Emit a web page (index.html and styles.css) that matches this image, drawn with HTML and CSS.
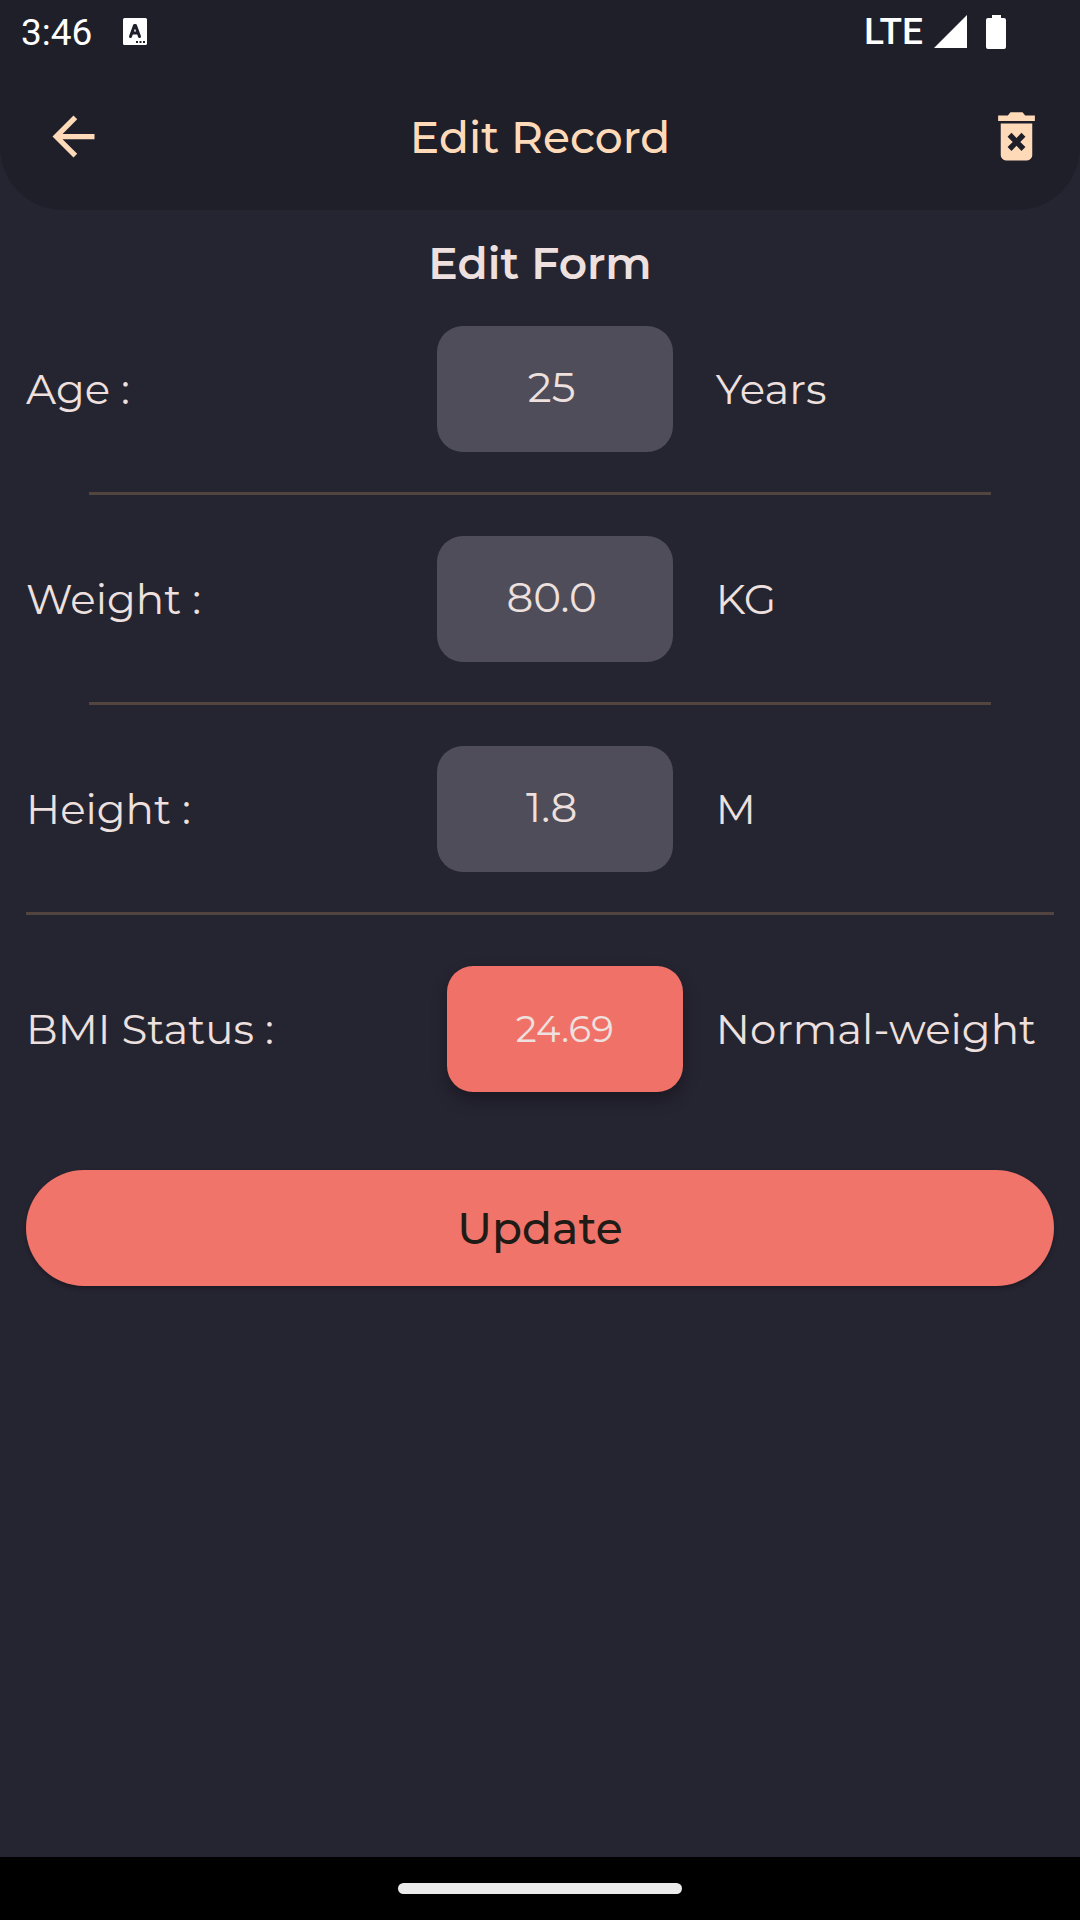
FILE: index.html
```html
<!DOCTYPE html>
<html lang="en">
<head>
<meta charset="utf-8">
<meta name="viewport" content="width=device-width, initial-scale=1">
<title>Edit Record</title>
<link rel="stylesheet" href="styles.css">
</head>
<body>
<header class="header">
  <div class="status">
    <span class="clock">3:46</span>
    <svg class="status-app" width="24" height="27" viewBox="0 0 24 27" aria-hidden="true">
      <path fill="#fff" fill-rule="evenodd" d="M1.500 0h21a1.500 1.500 0 0 1 1.500 1.500v24a1.500 1.500 0 0 1-1.500 1.500h-21A1.500 1.500 0 0 1 0 25.500v-24A1.500 1.500 0 0 1 1.500 0zM13 23v2h2v-2zM16.500 23v2h2v-2zM20 23v2h2v-2z"/>
      <path fill="none" stroke="#1f1f2a" stroke-width="3" stroke-linecap="round" stroke-linejoin="round" d="M7.500 18.500L11.500 7.500h1L16.500 18.500M9.500 15h5"/>
    </svg>
    <span class="network">LTE</span>
    <svg class="signal" width="33" height="33" viewBox="0 0 33 33" aria-hidden="true"><path fill="#fff" d="M33 0v33H0z"/></svg>
    <svg class="battery" width="20" height="34" viewBox="0 0 20 34" aria-hidden="true"><path fill="#fff" d="M6 0h9v3h3a2 2 0 0 1 2 2v27a2 2 0 0 1-2 2H2a2 2 0 0 1-2-2V5a2 2 0 0 1 2-2h4z"/></svg>
  </div>
  <div class="toolbar">
    <button class="icon-button" type="button" aria-label="Back">
      <svg viewBox="0 0 24 24" aria-hidden="true"><path fill="currentColor" d="M20 11H7.830l5.590-5.590L12 4l-8 8 8 8 1.410-1.410L7.830 13H20z"/></svg>
    </button>
    <h1 class="title">Edit Record</h1>
    <button class="icon-button icon-button-end" type="button" aria-label="Delete record">
      <svg viewBox="0 0 24 24" aria-hidden="true"><path fill="currentColor" fill-rule="evenodd" d="M5 4h3.700l1-1.200h4.600l1 1.200H19v2.100H5zM6 7h12V19.100a2 2 0 0 1-2 2H8a2 2 0 0 1-2-2zM10.100 10.600L8.600 12.100l1.950 1.950L8.600 16l1.500 1.500L12 15.550l1.900 1.950 1.500-1.500-1.950-1.950 1.950-1.950-1.500-1.500L12 12.550z"/></svg>
    </button>
  </div>
</header>

<main class="content">
  <h2 class="form-title">Edit Form</h2>
  <form class="form">
    <div class="row">
      <label for="age">Age :</label>
      <input class="field" id="age" type="text" inputmode="numeric" value="25">
      <span class="unit">Years</span>
    </div>
    <hr class="divider">
    <div class="row">
      <label for="weight">Weight :</label>
      <input class="field" id="weight" type="text" inputmode="decimal" value="80.0">
      <span class="unit">KG</span>
    </div>
    <hr class="divider">
    <div class="row">
      <label for="height">Height :</label>
      <input class="field" id="height" type="text" inputmode="decimal" value="1.8">
      <span class="unit">M</span>
    </div>
    <hr class="divider divider-full">
    <div class="row row-result">
      <label for="bmi">BMI Status :</label>
      <output class="result" id="bmi" for="weight height">24.69</output>
      <span class="unit">Normal-weight</span>
    </div>
    <button class="submit" type="button">Update</button>
  </form>
</main>

<footer class="system-nav"><span class="handle"></span></footer>
</body>
</html>
```
FILE: styles.css
```css
* {
  box-sizing: border-box;
}

body {
  margin: 0;
  min-height: 100vh;
  display: flex;
  flex-direction: column;
  background: #252431;
  color: #ede0de;
  font-family: Montserrat, Inter, sans-serif;
  font-size: 42px;
  line-height: 58px;
}

.header {
  background: #1f1f2a;
  border-radius: 0 0 63px 63px;
  color: #ffdab9;
}

.status {
  display: flex;
  align-items: center;
  height: 63px;
  padding: 0 74px 0 21px;
  color: #fff;
  font-family: Roboto, sans-serif;
  font-size: 37px;
}

.clock {
  padding-top: 2px;
}

.status-app {
  margin-left: 31px;
}

.network {
  margin-left: auto;
  font-weight: 500;
}

.signal {
  margin-left: 11px;
}

.battery {
  margin-left: 19px;
}

.toolbar {
  display: grid;
  grid-template-columns: 1fr auto 1fr;
  align-items: center;
  height: 147px;
  padding: 0 32px;
}

.icon-button {
  width: 63px;
  height: 63px;
  margin-left: 10px;
  padding: 0;
  border: 0;
  background: none;
  color: inherit;
}

.icon-button-end {
  justify-self: end;
  margin-left: 0;
}

.icon-button svg {
  display: block;
  width: 100%;
  height: 100%;
}

.title {
  margin: 0;
  font-size: 44px;
  font-weight: 500;
}

.content {
  flex: 1;
  padding: 24px 26px;
}

.form-title {
  margin: 0 0 34px;
  font-size: 44px;
  font-weight: 600;
  text-align: center;
}

.row {
  display: grid;
  grid-template-columns: 14fr 236px 13fr;
  align-items: center;
}

.row-result {
  grid-template-columns: 17fr 236px 15fr;
}

.field,
.result {
  width: 100%;
  height: 126px;
  border: 0;
  border-radius: 26px;
  color: inherit;
  font-family: inherit;
  text-align: center;
}

.field {
  padding: 0 6px 4px 0;
  background: #4e4d59;
  font-size: 42px;
}

.result {
  display: block;
  background: #f07167;
  box-shadow: 0 8px 16px rgba(0, 0, 0, 0.3);
  font-size: 37px;
  line-height: 126px;
}

.unit {
  padding-left: 43px;
  white-space: nowrap;
}

.row-result .unit {
  padding-left: 33px;
}

.divider {
  height: 3px;
  margin: 40px 63px 41px;
  border: 0;
  background: #52443f;
}

.divider-full {
  margin: 40px 0 51px;
}

.submit {
  display: block;
  width: 100%;
  height: 116px;
  margin-top: 78px;
  border: 0;
  border-radius: 58px;
  background: #f0746a;
  box-shadow: 0 3px 4px rgba(0, 0, 0, 0.25);
  color: #1f1b16;
  font-family: inherit;
  font-size: 44px;
  font-weight: 500;
}

.system-nav {
  display: flex;
  align-items: center;
  justify-content: center;
  height: 63px;
  background: #000;
}

.handle {
  width: 284px;
  height: 11px;
  border-radius: 6px;
  background: #ebebeb;
}
```
